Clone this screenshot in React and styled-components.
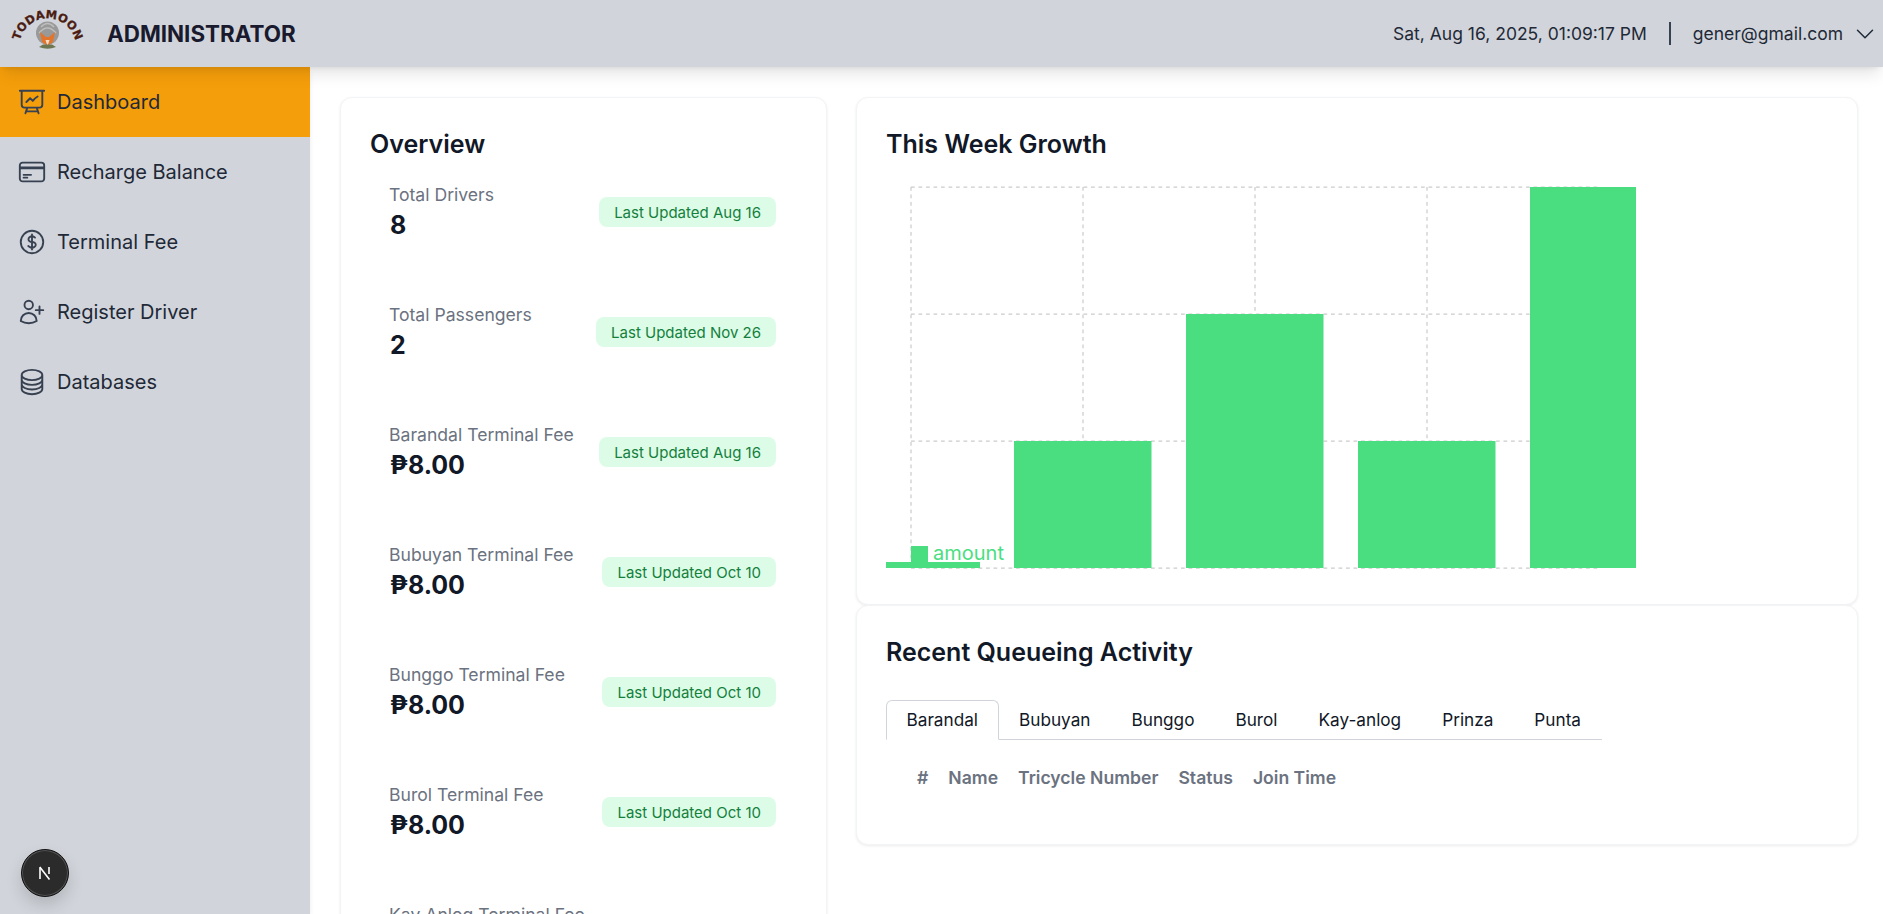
import React from 'react';
import styled, { createGlobalStyle } from 'styled-components';
import {
  HiOutlinePresentationChartLine,
  HiOutlineCreditCard,
  HiOutlineCurrencyDollar,
  HiOutlineUserPlus,
  HiOutlineCircleStack,
  HiOutlineChevronDown,
} from 'react-icons/hi2';

const NAV = [
  { label: 'Dashboard', icon: HiOutlinePresentationChartLine, active: true },
  { label: 'Recharge Balance', icon: HiOutlineCreditCard },
  { label: 'Terminal Fee', icon: HiOutlineCurrencyDollar },
  { label: 'Register Driver', icon: HiOutlineUserPlus },
  { label: 'Databases', icon: HiOutlineCircleStack },
];

const STATS = [
  { label: 'Total Drivers', value: '8', updated: 'Aug 16' },
  { label: 'Total Passengers', value: '2', updated: 'Nov 26' },
  { label: 'Barandal Terminal Fee', value: '₱8.00', updated: 'Aug 16' },
  { label: 'Bubuyan Terminal Fee', value: '₱8.00', updated: 'Oct 10' },
  { label: 'Bunggo Terminal Fee', value: '₱8.00', updated: 'Oct 10' },
  { label: 'Burol Terminal Fee', value: '₱8.00', updated: 'Oct 10' },
  { label: 'Kay Anlog Terminal Fee', value: '₱8.00', updated: 'Oct 10' },
];

const TABS = ['Barandal', 'Bubuyan', 'Bunggo', 'Burol', 'Kay-anlog', 'Prinza', 'Punta'];
const COLUMNS = ['#', 'Name', 'Tricycle Number', 'Status', 'Join Time'];

// chart geometry, same origin as the svg
const GRID_X = [25, 197, 369, 541, 713];
const GRID_Y = [10, 137, 264, 391];
const BARS = [
  { x: 128, w: 137.5, top: 264 },
  { x: 300, w: 137.5, top: 137 },
  { x: 472, w: 137.5, top: 264 },
  { x: 644, w: 137.5, top: 10 },
];

const GREEN = '#4ade80';

const GrowthChart = () => (
  <ChartSvg width="750" height="398" viewBox="0 0 750 398">
    <g stroke="#ccc" strokeWidth="1.25" strokeDasharray="3.75 3.75" fill="none">
      {GRID_Y.map((y) => (
        <line key={y} x1="25" x2="713" y1={y} y2={y} />
      ))}
      {GRID_X.map((x) => (
        <line key={x} x1={x} x2={x} y1="10" y2="391" />
      ))}
    </g>
    {BARS.map((b) => (
      <rect key={b.x} x={b.x} y={b.top} width={b.w} height={391 - b.top} fill={GREEN} />
    ))}
    <rect x="0" y="385" width="94" height="6" fill={GREEN} />
    <rect x="25" y="369" width="17" height="16" fill={GREEN} />
    <text x="47" y="383" fill={GREEN} fontSize="20" fontFamily="Inter, sans-serif">
      amount
    </text>
  </ChartSvg>
);

const Logo = () => (
  <svg width="84" height="67" viewBox="8 0 84 67">
    <defs>
      <path id="logoArc" d="M 19 47 A 28.5 28.5 0 0 1 76 47" />
    </defs>
    <text
      fill="#4a1c12"
      stroke="#4a1c12"
      strokeWidth="0.3"
      fontSize="11.5"
      fontWeight="700"
      fontFamily="'DejaVu Sans', sans-serif"
    >
      <textPath href="#logoArc" startOffset="50%" textAnchor="middle">
        TODAMOON
      </textPath>
    </text>
    <ellipse cx="47.5" cy="33" rx="11.5" ry="11.5" fill="#999" />
    <path d="M41 27 Q47.5 20 54 27 M39 33 Q47.5 23 56 33" stroke="#bdbdbd" strokeWidth="1.4" fill="none" />
    <path d="M40 32 L46 37 L49 37 L55 32 L53 42 L47.5 46 L42 42 Z" fill="#e2752e" />
    <path d="M45.5 40 L47.5 46 L49.5 40 Z" fill="#f3ddc8" />
    <path d="M39 47 Q47.5 50.5 56 47 L52 44.5 L43 44.5 Z" fill="#6d7650" />
  </svg>
);

const App = () => (
  <Page>
    <GlobalStyle />
    <Header>
      <Brand>
        <Logo />
        <BrandTitle>ADMINISTRATOR</BrandTitle>
      </Brand>
      <UserArea>
        <span>Sat, Aug 16, 2025, 01:09:17 PM</span>
        <Divider />
        <span>gener@gmail.com</span>
        <HiOutlineChevronDown size={24} />
      </UserArea>
    </Header>
    <Body>
      <Sidebar>
        {NAV.map(({ label, icon: Icon, active }) => (
          <NavItem key={label} $active={active}>
            <Icon size={30} />
            {label}
          </NavItem>
        ))}
        <DevBadge>
          <svg width="20" height="20" viewBox="0 0 20 20" fill="none">
            <path d="M5 16V4.5" stroke="#fff" strokeWidth="1.6" />
            <path d="M4.8 4 L14.5 16.5" stroke="#fff" strokeWidth="1.6" />
            <path d="M14 4v7" stroke="#fff" strokeWidth="1.6" />
          </svg>
        </DevBadge>
      </Sidebar>
      <Main>
        <Card>
          <CardTitle>Overview</CardTitle>
          <StatList>
            {STATS.map((s) => (
              <StatRow key={s.label}>
                <div>
                  <StatLabel>{s.label}</StatLabel>
                  <StatValue>{s.value}</StatValue>
                </div>
                <Badge>Last Updated {s.updated}</Badge>
              </StatRow>
            ))}
          </StatList>
        </Card>
        <RightColumn>
          <Card>
            <CardTitle>This Week Growth</CardTitle>
            <GrowthChart />
          </Card>
          <Card>
            <CardTitle>Recent Queueing Activity</CardTitle>
            <TabBar>
              {TABS.map((t, i) => (
                <Tab key={t} $active={i === 0}>
                  {t}
                </Tab>
              ))}
            </TabBar>
            <QueueTable>
              <thead>
                <tr>
                  {COLUMNS.map((c) => (
                    <th key={c}>{c}</th>
                  ))}
                </tr>
              </thead>
            </QueueTable>
          </Card>
        </RightColumn>
      </Main>
    </Body>
  </Page>
);

export default App;

const GlobalStyle = createGlobalStyle`
  * {
    box-sizing: border-box;
  }
  html, body {
    margin: 0;
    height: 100%;
    overflow: hidden;
    background: #fff;
    font-family: Inter, "Liberation Sans", sans-serif;
    color: #111827;
  }
`;

const Page = styled.div`
  height: 100vh;
  display: flex;
  flex-direction: column;
  overflow: hidden;
`;

const Header = styled.header`
  height: 67px;
  flex: none;
  display: flex;
  align-items: center;
  justify-content: space-between;
  padding: 0 6px 0 8px;
  background: #d1d5db;
  box-shadow: 0 10px 15px -3px rgba(0, 0, 0, 0.1), 0 4px 6px -4px rgba(0, 0, 0, 0.1);
  position: relative;
  z-index: 2;
`;

const Brand = styled.div`
  display: flex;
  align-items: center;
  gap: 15px;
`;

const BrandTitle = styled.div`
  font-size: 22.4px;
  font-weight: 700;
  color: #1a1a2e;
`;

const UserArea = styled.div`
  display: flex;
  align-items: center;
  font-size: 17.5px;
  color: #1f2937;
  svg {
    margin-left: 10px;
  }
`;

const Divider = styled.div`
  width: 2px;
  height: 23px;
  margin: 0 22px;
  background: #374151;
`;

const Body = styled.div`
  flex: 1;
  min-height: 0;
  display: flex;
`;

const Sidebar = styled.nav`
  width: 310px;
  flex: none;
  background: #d1d5db;
  box-shadow: 0 4px 6px -1px rgba(0, 0, 0, 0.1);
`;

const NavItem = styled.div`
  height: 70px;
  display: flex;
  align-items: center;
  gap: 10px;
  padding-left: 17px;
  font-size: 20px;
  color: #1f2937;
  background: ${(p) => (p.$active ? '#f59e0b' : 'transparent')};
  svg {
    color: #374151;
  }
`;

const DevBadge = styled.div`
  position: fixed;
  left: 21px;
  bottom: 17px;
  width: 48px;
  height: 48px;
  border-radius: 50%;
  display: flex;
  align-items: center;
  justify-content: center;
  background: #2b2b2b;
  border: 1px solid #111;
  box-shadow: 0 0 0 1px #555 inset, 0 8px 16px rgba(0, 0, 0, 0.15);
`;

const Main = styled.main`
  flex: 1;
  min-width: 0;
  display: grid;
  grid-template-columns: 487px 1002px;
  column-gap: 29px;
  align-items: start;
  padding: 30px 0 0 30px;
  overflow: hidden;
`;

const RightColumn = styled.div`
  display: flex;
  flex-direction: column;
`;

const Card = styled.section`
  background: #fff;
  border: 1px solid #f3f4f6;
  border-radius: 12px;
  padding: 29px;
  box-shadow: 0 1px 3px rgba(0, 0, 0, 0.08);
`;

const CardTitle = styled.h2`
  margin: 0;
  font-size: 25px;
  line-height: 35px;
  font-weight: 600;
  color: #111827;
`;

const StatList = styled.div`
  display: flex;
  flex-direction: column;
  gap: 62px;
  margin-top: 21px;
  padding: 0 21px 0 20px;
`;

const StatRow = styled.div`
  display: flex;
  align-items: center;
  justify-content: space-between;
`;

const StatLabel = styled.div`
  font-size: 17.6px;
  line-height: 24px;
  color: #6b7280;
  margin-left: -1px;
`;

const StatValue = styled.div`
  margin-top: 2px;
  font-size: 25px;
  line-height: 32px;
  font-weight: 700;
  color: #111827;
`;

const Badge = styled.div`
  height: 30px;
  display: flex;
  align-items: center;
  padding: 0 15px;
  border-radius: 8px;
  font-size: 15px;
  background: #dcfce7;
  color: #15803d;
`;

const ChartSvg = styled.svg`
  display: block;
  margin-top: 15px;
`;

const TabBar = styled.div`
  display: flex;
  width: fit-content;
  margin-top: 30px;
  border-bottom: 1px solid #d1d5db;
`;

const Tab = styled.div`
  height: 40px;
  padding: 0 19.5px 1px;
  display: flex;
  align-items: center;
  font-size: 17.2px;
  color: #111827;
  margin-bottom: -1px;
  border: 1px solid ${(p) => (p.$active ? '#d1d5db' : 'transparent')};
  border-bottom-color: ${(p) => (p.$active ? '#fff' : 'transparent')};
  border-radius: 6px 6px 0 0;
  background: ${(p) => (p.$active ? '#fff' : 'transparent')};
`;

const QueueTable = styled.table`
  margin: 16px 0 15px 21px;
  border-collapse: collapse;
  th {
    padding: 10px;
    font-size: 17.6px;
    line-height: 24px;
    font-weight: 600;
    color: #6b7280;
    text-align: left;
  }
`;
